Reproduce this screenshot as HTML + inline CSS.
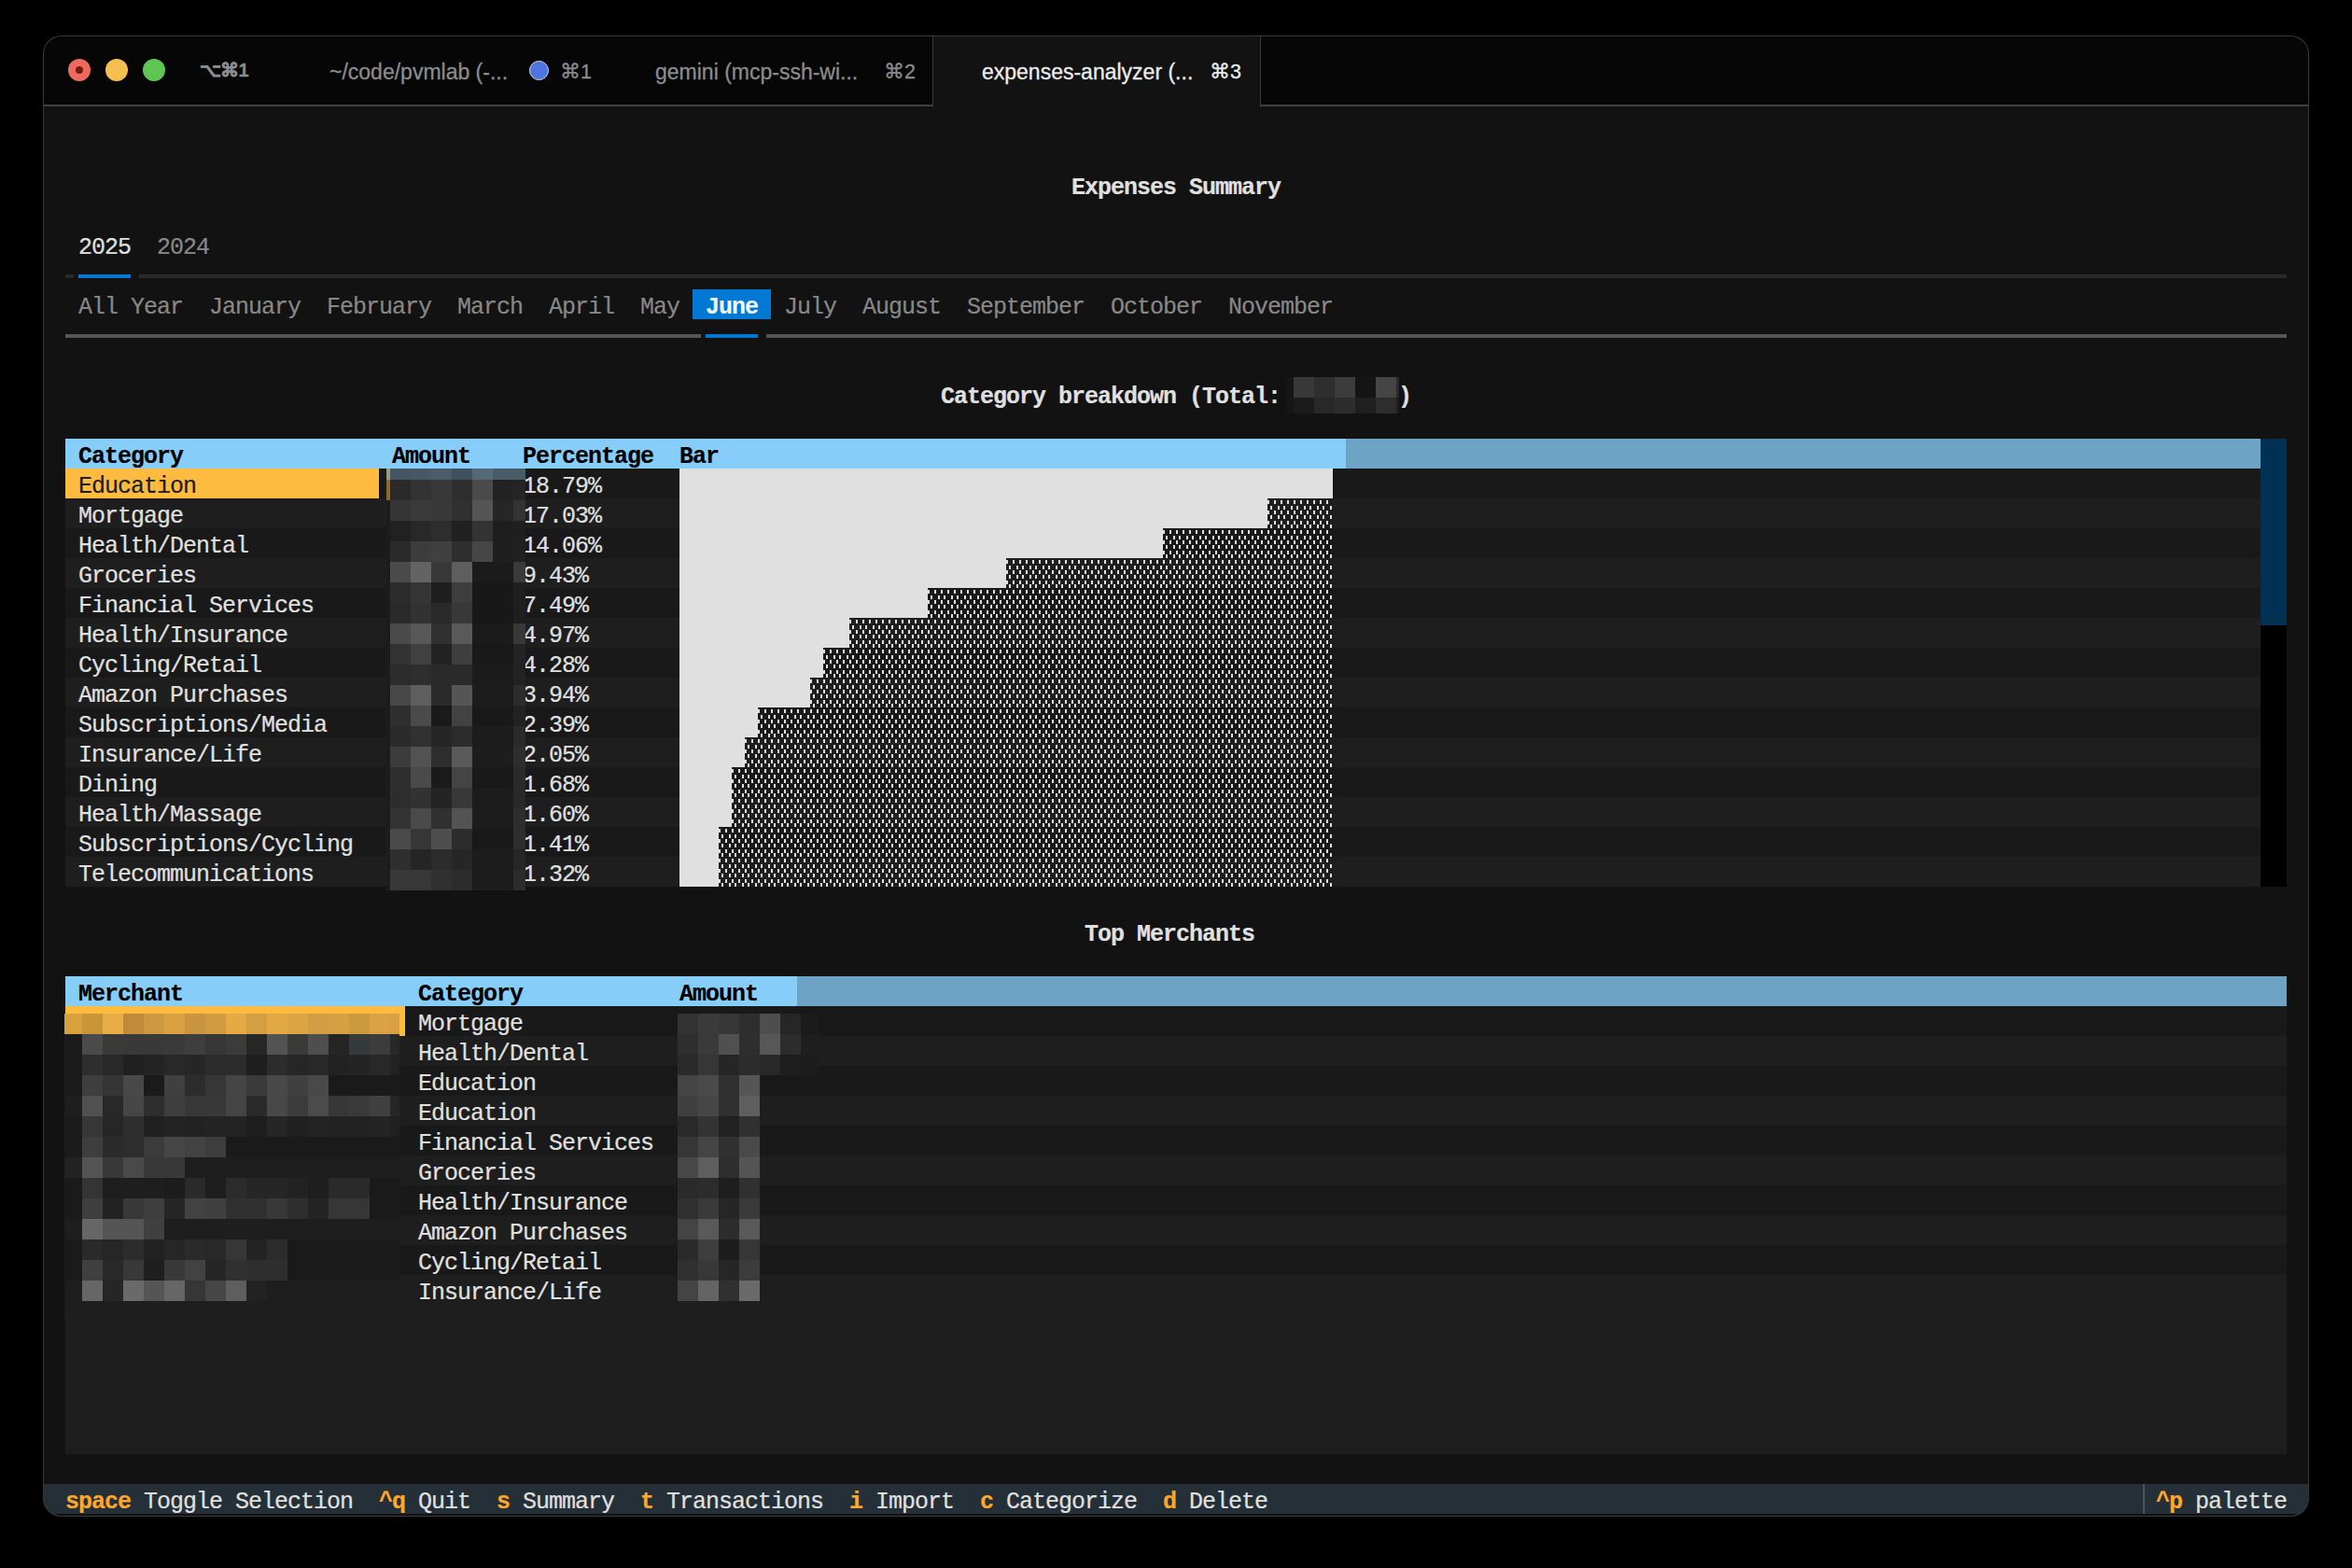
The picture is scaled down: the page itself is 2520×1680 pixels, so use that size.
<!DOCTYPE html>
<html><head><meta charset="utf-8">
<style>
html,body{margin:0;padding:0;}
body{width:2520px;height:1680px;background:#000;position:relative;overflow:hidden;font-family:"Liberation Mono",monospace;}
.t{position:absolute;white-space:pre;font-size:25px;letter-spacing:-1px;line-height:32px;height:32px;padding-top:2.5px;box-sizing:border-box;transform:scaleY(1.06);transform-origin:0 0;-webkit-text-stroke:0.2px currentColor;}
.s{position:absolute;white-space:pre;font-family:"Liberation Sans",sans-serif;font-size:23px;line-height:30px;-webkit-text-stroke:0.3px currentColor;}
#win{position:absolute;left:46px;top:38px;width:2428px;height:1587px;border-radius:20px;overflow:hidden;background:#121212;}
</style></head><body>
<svg width="0" height="0" style="position:absolute"><defs>
<pattern id="shade" patternUnits="userSpaceOnUse" width="14" height="32"><g fill="#e0e0e0"><rect x="0" y="2" width="2" height="4"/><rect x="0" y="13" width="2" height="4"/><rect x="0" y="24" width="2" height="4"/><rect x="7" y="2" width="2" height="4"/><rect x="7" y="13" width="2" height="4"/><rect x="7" y="24" width="2" height="4"/><rect x="3" y="8" width="2" height="4"/><rect x="3" y="18" width="2" height="4"/><rect x="3" y="28" width="2" height="4"/><rect x="11" y="8" width="2" height="4"/><rect x="11" y="18" width="2" height="4"/><rect x="11" y="28" width="2" height="4"/></g></pattern></defs></svg>
<div id="win">
<div style="position:absolute;left:-46px;top:-38px;width:2520px;height:1680px;">
<div style="position:absolute;left:46px;top:113px;width:2428px;height:1512px;background:#121212;"></div>
<div class="t" style="left:1148px;top:182px;color:#e0e0e0;font-weight:bold;">Expenses Summary</div>
<div class="t" style="left:84px;top:246px;color:#e0e0e0;">2025</div>
<div class="t" style="left:168px;top:246px;color:#888888;">2024</div>
<div style="position:absolute;left:70px;top:294px;width:9px;height:4px;background:#2a2a2a;"></div>
<div style="position:absolute;left:84px;top:294px;width:56px;height:4px;background:#0178d4;"></div>
<div style="position:absolute;left:149px;top:294px;width:2301px;height:4px;background:#2a2a2a;"></div>
<div class="t" style="left:84px;top:310px;color:#888888;">All Year</div>
<div class="t" style="left:224px;top:310px;color:#888888;">January</div>
<div class="t" style="left:350px;top:310px;color:#888888;">February</div>
<div class="t" style="left:490px;top:310px;color:#888888;">March</div>
<div class="t" style="left:588px;top:310px;color:#888888;">April</div>
<div class="t" style="left:686px;top:310px;color:#888888;">May</div>
<div style="position:absolute;left:742px;top:310px;width:84px;height:32px;background:#0178d4;"></div>
<div class="t" style="left:756px;top:310px;color:#eef6fd;font-weight:bold;">June</div>
<div class="t" style="left:840px;top:310px;color:#888888;">July</div>
<div class="t" style="left:924px;top:310px;color:#888888;">August</div>
<div class="t" style="left:1036px;top:310px;color:#888888;">September</div>
<div class="t" style="left:1190px;top:310px;color:#888888;">October</div>
<div class="t" style="left:1316px;top:310px;color:#888888;">November</div>
<div style="position:absolute;left:70px;top:358px;width:681px;height:4px;background:#555555;"></div>
<div style="position:absolute;left:756px;top:358px;width:56px;height:4px;background:#0178d4;"></div>
<div style="position:absolute;left:821px;top:358px;width:1629px;height:4px;background:#555555;"></div>
<div class="t" style="left:1008px;top:406px;color:#e0e0e0;font-weight:bold;">Category breakdown (Total: </div>
<div class="t" style="left:1498px;top:406px;color:#e0e0e0;font-weight:bold;">)</div>
<div style="position:absolute;left:70px;top:470px;width:1372px;height:32px;background:#87cdf9;"></div>
<div style="position:absolute;left:1442px;top:470px;width:980px;height:32px;background:#6da4c6;"></div>
<div class="t" style="left:84px;top:470px;color:#000;font-weight:bold;">Category</div>
<div class="t" style="left:420px;top:470px;color:#000;font-weight:bold;">Amount</div>
<div class="t" style="left:560px;top:470px;color:#000;font-weight:bold;">Percentage</div>
<div class="t" style="left:728px;top:470px;color:#000;font-weight:bold;">Bar</div>
<div style="position:absolute;left:70px;top:502px;width:2352px;height:32px;background:#191919;"></div>
<div style="position:absolute;left:70px;top:502px;width:336px;height:32px;background:#ffba40;"></div>
<div class="t" style="left:84px;top:502px;color:#1e1e1e;">Education</div>
<div class="t" style="left:560px;top:502px;color:#e0e0e0;">18.79%</div>
<div style="position:absolute;left:728px;top:502px;width:700px;height:32px;background:#e0e0e0;"></div>
<div style="position:absolute;left:70px;top:534px;width:2352px;height:32px;background:#1e1e1e;"></div>
<div class="t" style="left:84px;top:534px;color:#e0e0e0;">Mortgage</div>
<div class="t" style="left:560px;top:534px;color:#e0e0e0;">17.03%</div>
<div style="position:absolute;left:728px;top:534px;width:630px;height:32px;background:#e0e0e0;"></div>
<svg style="position:absolute;left:1358px;top:534px" width="70" height="32"><rect width="100%" height="100%" fill="url(#shade)"/></svg>
<div style="position:absolute;left:70px;top:566px;width:2352px;height:32px;background:#191919;"></div>
<div class="t" style="left:84px;top:566px;color:#e0e0e0;">Health/Dental</div>
<div class="t" style="left:560px;top:566px;color:#e0e0e0;">14.06%</div>
<div style="position:absolute;left:728px;top:566px;width:518px;height:32px;background:#e0e0e0;"></div>
<svg style="position:absolute;left:1246px;top:566px" width="182" height="32"><rect width="100%" height="100%" fill="url(#shade)"/></svg>
<div style="position:absolute;left:70px;top:598px;width:2352px;height:32px;background:#1e1e1e;"></div>
<div class="t" style="left:84px;top:598px;color:#e0e0e0;">Groceries</div>
<div class="t" style="left:560px;top:598px;color:#e0e0e0;">9.43%</div>
<div style="position:absolute;left:728px;top:598px;width:350px;height:32px;background:#e0e0e0;"></div>
<svg style="position:absolute;left:1078px;top:598px" width="350" height="32"><rect width="100%" height="100%" fill="url(#shade)"/></svg>
<div style="position:absolute;left:70px;top:630px;width:2352px;height:32px;background:#191919;"></div>
<div class="t" style="left:84px;top:630px;color:#e0e0e0;">Financial Services</div>
<div class="t" style="left:560px;top:630px;color:#e0e0e0;">7.49%</div>
<div style="position:absolute;left:728px;top:630px;width:266px;height:32px;background:#e0e0e0;"></div>
<svg style="position:absolute;left:994px;top:630px" width="434" height="32"><rect width="100%" height="100%" fill="url(#shade)"/></svg>
<div style="position:absolute;left:70px;top:662px;width:2352px;height:32px;background:#1e1e1e;"></div>
<div class="t" style="left:84px;top:662px;color:#e0e0e0;">Health/Insurance</div>
<div class="t" style="left:560px;top:662px;color:#e0e0e0;">4.97%</div>
<div style="position:absolute;left:728px;top:662px;width:182px;height:32px;background:#e0e0e0;"></div>
<svg style="position:absolute;left:910px;top:662px" width="518" height="32"><rect width="100%" height="100%" fill="url(#shade)"/></svg>
<div style="position:absolute;left:70px;top:694px;width:2352px;height:32px;background:#191919;"></div>
<div class="t" style="left:84px;top:694px;color:#e0e0e0;">Cycling/Retail</div>
<div class="t" style="left:560px;top:694px;color:#e0e0e0;">4.28%</div>
<div style="position:absolute;left:728px;top:694px;width:154px;height:32px;background:#e0e0e0;"></div>
<svg style="position:absolute;left:882px;top:694px" width="546" height="32"><rect width="100%" height="100%" fill="url(#shade)"/></svg>
<div style="position:absolute;left:70px;top:726px;width:2352px;height:32px;background:#1e1e1e;"></div>
<div class="t" style="left:84px;top:726px;color:#e0e0e0;">Amazon Purchases</div>
<div class="t" style="left:560px;top:726px;color:#e0e0e0;">3.94%</div>
<div style="position:absolute;left:728px;top:726px;width:140px;height:32px;background:#e0e0e0;"></div>
<svg style="position:absolute;left:868px;top:726px" width="560" height="32"><rect width="100%" height="100%" fill="url(#shade)"/></svg>
<div style="position:absolute;left:70px;top:758px;width:2352px;height:32px;background:#191919;"></div>
<div class="t" style="left:84px;top:758px;color:#e0e0e0;">Subscriptions/Media</div>
<div class="t" style="left:560px;top:758px;color:#e0e0e0;">2.39%</div>
<div style="position:absolute;left:728px;top:758px;width:84px;height:32px;background:#e0e0e0;"></div>
<svg style="position:absolute;left:812px;top:758px" width="616" height="32"><rect width="100%" height="100%" fill="url(#shade)"/></svg>
<div style="position:absolute;left:70px;top:790px;width:2352px;height:32px;background:#1e1e1e;"></div>
<div class="t" style="left:84px;top:790px;color:#e0e0e0;">Insurance/Life</div>
<div class="t" style="left:560px;top:790px;color:#e0e0e0;">2.05%</div>
<div style="position:absolute;left:728px;top:790px;width:70px;height:32px;background:#e0e0e0;"></div>
<svg style="position:absolute;left:798px;top:790px" width="630" height="32"><rect width="100%" height="100%" fill="url(#shade)"/></svg>
<div style="position:absolute;left:70px;top:822px;width:2352px;height:32px;background:#191919;"></div>
<div class="t" style="left:84px;top:822px;color:#e0e0e0;">Dining</div>
<div class="t" style="left:560px;top:822px;color:#e0e0e0;">1.68%</div>
<div style="position:absolute;left:728px;top:822px;width:56px;height:32px;background:#e0e0e0;"></div>
<svg style="position:absolute;left:784px;top:822px" width="644" height="32"><rect width="100%" height="100%" fill="url(#shade)"/></svg>
<div style="position:absolute;left:70px;top:854px;width:2352px;height:32px;background:#1e1e1e;"></div>
<div class="t" style="left:84px;top:854px;color:#e0e0e0;">Health/Massage</div>
<div class="t" style="left:560px;top:854px;color:#e0e0e0;">1.60%</div>
<div style="position:absolute;left:728px;top:854px;width:56px;height:32px;background:#e0e0e0;"></div>
<svg style="position:absolute;left:784px;top:854px" width="644" height="32"><rect width="100%" height="100%" fill="url(#shade)"/></svg>
<div style="position:absolute;left:70px;top:886px;width:2352px;height:32px;background:#191919;"></div>
<div class="t" style="left:84px;top:886px;color:#e0e0e0;">Subscriptions/Cycling</div>
<div class="t" style="left:560px;top:886px;color:#e0e0e0;">1.41%</div>
<div style="position:absolute;left:728px;top:886px;width:42px;height:32px;background:#e0e0e0;"></div>
<svg style="position:absolute;left:770px;top:886px" width="658" height="32"><rect width="100%" height="100%" fill="url(#shade)"/></svg>
<div style="position:absolute;left:70px;top:918px;width:2352px;height:32px;background:#1e1e1e;"></div>
<div class="t" style="left:84px;top:918px;color:#e0e0e0;">Telecommunications</div>
<div class="t" style="left:560px;top:918px;color:#e0e0e0;">1.32%</div>
<div style="position:absolute;left:728px;top:918px;width:42px;height:32px;background:#e0e0e0;"></div>
<svg style="position:absolute;left:770px;top:918px" width="658" height="32"><rect width="100%" height="100%" fill="url(#shade)"/></svg>
<div style="position:absolute;left:2422px;top:470px;width:28px;height:200px;background:#003153;"></div>
<div style="position:absolute;left:2422px;top:670px;width:28px;height:280px;background:#000000;"></div>
<div class="t" style="left:1162px;top:982px;color:#e0e0e0;font-weight:bold;">Top Merchants</div>
<div style="position:absolute;left:70px;top:1046px;width:784px;height:32px;background:#87cdf9;"></div>
<div style="position:absolute;left:854px;top:1046px;width:1596px;height:32px;background:#6da4c6;"></div>
<div class="t" style="left:84px;top:1046px;color:#000;font-weight:bold;">Merchant</div>
<div class="t" style="left:448px;top:1046px;color:#000;font-weight:bold;">Category</div>
<div class="t" style="left:728px;top:1046px;color:#000;font-weight:bold;">Amount</div>
<div style="position:absolute;left:70px;top:1078px;width:2380px;height:480px;background:#1e1e1e;"></div>
<div style="position:absolute;left:70px;top:1078px;width:2380px;height:32px;background:#191919;"></div>
<div style="position:absolute;left:70px;top:1078px;width:364px;height:32px;background:#ffba40;"></div>
<div class="t" style="left:448px;top:1078px;color:#e0e0e0;">Mortgage</div>
<div style="position:absolute;left:70px;top:1110px;width:2380px;height:32px;background:#1e1e1e;"></div>
<div class="t" style="left:448px;top:1110px;color:#e0e0e0;">Health/Dental</div>
<div style="position:absolute;left:70px;top:1142px;width:2380px;height:32px;background:#191919;"></div>
<div class="t" style="left:448px;top:1142px;color:#e0e0e0;">Education</div>
<div style="position:absolute;left:70px;top:1174px;width:2380px;height:32px;background:#1e1e1e;"></div>
<div class="t" style="left:448px;top:1174px;color:#e0e0e0;">Education</div>
<div style="position:absolute;left:70px;top:1206px;width:2380px;height:32px;background:#191919;"></div>
<div class="t" style="left:448px;top:1206px;color:#e0e0e0;">Financial Services</div>
<div style="position:absolute;left:70px;top:1238px;width:2380px;height:32px;background:#1e1e1e;"></div>
<div class="t" style="left:448px;top:1238px;color:#e0e0e0;">Groceries</div>
<div style="position:absolute;left:70px;top:1270px;width:2380px;height:32px;background:#191919;"></div>
<div class="t" style="left:448px;top:1270px;color:#e0e0e0;">Health/Insurance</div>
<div style="position:absolute;left:70px;top:1302px;width:2380px;height:32px;background:#1e1e1e;"></div>
<div class="t" style="left:448px;top:1302px;color:#e0e0e0;">Amazon Purchases</div>
<div style="position:absolute;left:70px;top:1334px;width:2380px;height:32px;background:#191919;"></div>
<div class="t" style="left:448px;top:1334px;color:#e0e0e0;">Cycling/Retail</div>
<div style="position:absolute;left:70px;top:1366px;width:2380px;height:32px;background:#1e1e1e;"></div>
<div class="t" style="left:448px;top:1366px;color:#e0e0e0;">Insurance/Life</div>
<svg style="position:absolute;left:414px;top:502px" width="149" height="452" shape-rendering="crispEdges"><rect x="0" y="0" width="4" height="12" fill="#9a9a80"/><rect x="4" y="0" width="22" height="12" fill="#435662"/><rect x="26" y="0" width="22" height="12" fill="#455864"/><rect x="48" y="0" width="22" height="12" fill="#4a5c68"/><rect x="70" y="0" width="22" height="12" fill="#3f515d"/><rect x="92" y="0" width="22" height="12" fill="#556878"/><rect x="114" y="0" width="22" height="12" fill="#4a5b68"/><rect x="136" y="0" width="13" height="12" fill="#4a5b68"/><rect x="0" y="12" width="4" height="22" fill="#8b6a30"/><rect x="4" y="12" width="22" height="22" fill="#2a2a2a"/><rect x="26" y="12" width="22" height="22" fill="#333333"/><rect x="48" y="12" width="22" height="22" fill="#393939"/><rect x="70" y="12" width="22" height="22" fill="#2e2e2e"/><rect x="92" y="12" width="22" height="22" fill="#4a4a4a"/><rect x="114" y="12" width="22" height="22" fill="#222222"/><rect x="136" y="12" width="13" height="22" fill="#252525"/><rect x="0" y="34" width="4" height="22" fill="#1c1c1c"/><rect x="4" y="34" width="22" height="22" fill="#353535"/><rect x="26" y="34" width="22" height="22" fill="#3a3a3a"/><rect x="48" y="34" width="22" height="22" fill="#383838"/><rect x="70" y="34" width="22" height="22" fill="#303030"/><rect x="92" y="34" width="22" height="22" fill="#555555"/><rect x="114" y="34" width="22" height="22" fill="#262626"/><rect x="136" y="34" width="13" height="22" fill="#333333"/><rect x="0" y="56" width="4" height="22" fill="#1c1c1c"/><rect x="4" y="56" width="22" height="22" fill="#212121"/><rect x="26" y="56" width="22" height="22" fill="#282828"/><rect x="48" y="56" width="22" height="22" fill="#2d2d2d"/><rect x="70" y="56" width="22" height="22" fill="#202020"/><rect x="92" y="56" width="22" height="22" fill="#333333"/><rect x="114" y="56" width="22" height="22" fill="#1e1e1e"/><rect x="136" y="56" width="13" height="22" fill="#1f1f1f"/><rect x="0" y="78" width="4" height="22" fill="#1c1c1c"/><rect x="4" y="78" width="22" height="22" fill="#2a2a2a"/><rect x="26" y="78" width="22" height="22" fill="#3c3c3c"/><rect x="48" y="78" width="22" height="22" fill="#404040"/><rect x="70" y="78" width="22" height="22" fill="#2e2e2e"/><rect x="92" y="78" width="22" height="22" fill="#464646"/><rect x="114" y="78" width="22" height="22" fill="#1f1f1f"/><rect x="136" y="78" width="13" height="22" fill="#202020"/><rect x="0" y="100" width="4" height="22" fill="#1c1c1c"/><rect x="4" y="100" width="22" height="22" fill="#4a4a4a"/><rect x="26" y="100" width="22" height="22" fill="#636363"/><rect x="48" y="100" width="22" height="22" fill="#383838"/><rect x="70" y="100" width="22" height="22" fill="#5e5e5e"/><rect x="92" y="100" width="22" height="22" fill="#1b1b1b"/><rect x="114" y="100" width="22" height="22" fill="#1b1b1b"/><rect x="136" y="100" width="13" height="22" fill="#3a3a3a"/><rect x="0" y="122" width="4" height="22" fill="#1c1c1c"/><rect x="4" y="122" width="22" height="22" fill="#2c2c2c"/><rect x="26" y="122" width="22" height="22" fill="#353535"/><rect x="48" y="122" width="22" height="22" fill="#1f1f1f"/><rect x="70" y="122" width="22" height="22" fill="#3d3d3d"/><rect x="92" y="122" width="22" height="22" fill="#181818"/><rect x="114" y="122" width="22" height="22" fill="#181818"/><rect x="136" y="122" width="13" height="22" fill="#1f1f1f"/><rect x="0" y="144" width="4" height="22" fill="#1c1c1c"/><rect x="4" y="144" width="22" height="22" fill="#2a2a2a"/><rect x="26" y="144" width="22" height="22" fill="#323232"/><rect x="48" y="144" width="22" height="22" fill="#2a2a2a"/><rect x="70" y="144" width="22" height="22" fill="#383838"/><rect x="92" y="144" width="22" height="22" fill="#181818"/><rect x="114" y="144" width="22" height="22" fill="#181818"/><rect x="136" y="144" width="13" height="22" fill="#1e1e1e"/><rect x="0" y="166" width="4" height="22" fill="#1c1c1c"/><rect x="4" y="166" width="22" height="22" fill="#4a4a4a"/><rect x="26" y="166" width="22" height="22" fill="#585858"/><rect x="48" y="166" width="22" height="22" fill="#303030"/><rect x="70" y="166" width="22" height="22" fill="#595959"/><rect x="92" y="166" width="22" height="22" fill="#1b1b1b"/><rect x="114" y="166" width="22" height="22" fill="#1b1b1b"/><rect x="136" y="166" width="13" height="22" fill="#383838"/><rect x="0" y="188" width="4" height="22" fill="#1c1c1c"/><rect x="4" y="188" width="22" height="22" fill="#333333"/><rect x="26" y="188" width="22" height="22" fill="#404040"/><rect x="48" y="188" width="22" height="22" fill="#222222"/><rect x="70" y="188" width="22" height="22" fill="#3e3e3e"/><rect x="92" y="188" width="22" height="22" fill="#191919"/><rect x="114" y="188" width="22" height="22" fill="#191919"/><rect x="136" y="188" width="13" height="22" fill="#232323"/><rect x="0" y="210" width="4" height="22" fill="#1c1c1c"/><rect x="4" y="210" width="22" height="22" fill="#2c2c2c"/><rect x="26" y="210" width="22" height="22" fill="#2e2e2e"/><rect x="48" y="210" width="22" height="22" fill="#2a2a2a"/><rect x="70" y="210" width="22" height="22" fill="#2b2b2b"/><rect x="92" y="210" width="22" height="22" fill="#1b1b1b"/><rect x="114" y="210" width="22" height="22" fill="#1b1b1b"/><rect x="136" y="210" width="13" height="22" fill="#222222"/><rect x="0" y="232" width="4" height="22" fill="#1c1c1c"/><rect x="4" y="232" width="22" height="22" fill="#484848"/><rect x="26" y="232" width="22" height="22" fill="#5e5e5e"/><rect x="48" y="232" width="22" height="22" fill="#2a2a2a"/><rect x="70" y="232" width="22" height="22" fill="#555555"/><rect x="92" y="232" width="22" height="22" fill="#1c1c1c"/><rect x="114" y="232" width="22" height="22" fill="#1c1c1c"/><rect x="136" y="232" width="13" height="22" fill="#2c2c2c"/><rect x="0" y="254" width="4" height="22" fill="#1c1c1c"/><rect x="4" y="254" width="22" height="22" fill="#2e2e2e"/><rect x="26" y="254" width="22" height="22" fill="#4a4a4a"/><rect x="48" y="254" width="22" height="22" fill="#1a1a1a"/><rect x="70" y="254" width="22" height="22" fill="#424242"/><rect x="92" y="254" width="22" height="22" fill="#191919"/><rect x="114" y="254" width="22" height="22" fill="#191919"/><rect x="136" y="254" width="13" height="22" fill="#222222"/><rect x="0" y="276" width="4" height="22" fill="#1c1c1c"/><rect x="4" y="276" width="22" height="22" fill="#2a2a2a"/><rect x="26" y="276" width="22" height="22" fill="#313131"/><rect x="48" y="276" width="22" height="22" fill="#262626"/><rect x="70" y="276" width="22" height="22" fill="#2c2c2c"/><rect x="92" y="276" width="22" height="22" fill="#1c1c1c"/><rect x="114" y="276" width="22" height="22" fill="#1c1c1c"/><rect x="136" y="276" width="13" height="22" fill="#2a2a2a"/><rect x="0" y="298" width="4" height="22" fill="#1c1c1c"/><rect x="4" y="298" width="22" height="22" fill="#3c3c3c"/><rect x="26" y="298" width="22" height="22" fill="#525252"/><rect x="48" y="298" width="22" height="22" fill="#2e2e2e"/><rect x="70" y="298" width="22" height="22" fill="#5a5a5a"/><rect x="92" y="298" width="22" height="22" fill="#1d1d1d"/><rect x="114" y="298" width="22" height="22" fill="#1d1d1d"/><rect x="136" y="298" width="13" height="22" fill="#2e2e2e"/><rect x="0" y="320" width="4" height="22" fill="#1c1c1c"/><rect x="4" y="320" width="22" height="22" fill="#2e2e2e"/><rect x="26" y="320" width="22" height="22" fill="#4a4a4a"/><rect x="48" y="320" width="22" height="22" fill="#1a1a1a"/><rect x="70" y="320" width="22" height="22" fill="#444444"/><rect x="92" y="320" width="22" height="22" fill="#191919"/><rect x="114" y="320" width="22" height="22" fill="#191919"/><rect x="136" y="320" width="13" height="22" fill="#2a2a2a"/><rect x="0" y="342" width="4" height="22" fill="#1c1c1c"/><rect x="4" y="342" width="22" height="22" fill="#2d2d2d"/><rect x="26" y="342" width="22" height="22" fill="#323232"/><rect x="48" y="342" width="22" height="22" fill="#242424"/><rect x="70" y="342" width="22" height="22" fill="#383838"/><rect x="92" y="342" width="22" height="22" fill="#1c1c1c"/><rect x="114" y="342" width="22" height="22" fill="#1c1c1c"/><rect x="136" y="342" width="13" height="22" fill="#282828"/><rect x="0" y="364" width="4" height="22" fill="#1c1c1c"/><rect x="4" y="364" width="22" height="22" fill="#333333"/><rect x="26" y="364" width="22" height="22" fill="#4a4a4a"/><rect x="48" y="364" width="22" height="22" fill="#303030"/><rect x="70" y="364" width="22" height="22" fill="#535353"/><rect x="92" y="364" width="22" height="22" fill="#1c1c1c"/><rect x="114" y="364" width="22" height="22" fill="#1c1c1c"/><rect x="136" y="364" width="13" height="22" fill="#2e2e2e"/><rect x="0" y="386" width="4" height="22" fill="#1c1c1c"/><rect x="4" y="386" width="22" height="22" fill="#4a4a4a"/><rect x="26" y="386" width="22" height="22" fill="#363636"/><rect x="48" y="386" width="22" height="22" fill="#4e4e4e"/><rect x="70" y="386" width="22" height="22" fill="#2c2c2c"/><rect x="92" y="386" width="22" height="22" fill="#191919"/><rect x="114" y="386" width="22" height="22" fill="#191919"/><rect x="136" y="386" width="13" height="22" fill="#2e2e2e"/><rect x="0" y="408" width="4" height="22" fill="#1c1c1c"/><rect x="4" y="408" width="22" height="22" fill="#2e2e2e"/><rect x="26" y="408" width="22" height="22" fill="#252525"/><rect x="48" y="408" width="22" height="22" fill="#2c2c2c"/><rect x="70" y="408" width="22" height="22" fill="#262626"/><rect x="92" y="408" width="22" height="22" fill="#1c1c1c"/><rect x="114" y="408" width="22" height="22" fill="#1c1c1c"/><rect x="136" y="408" width="13" height="22" fill="#262626"/><rect x="0" y="430" width="4" height="22" fill="#1c1c1c"/><rect x="4" y="430" width="22" height="22" fill="#383838"/><rect x="26" y="430" width="22" height="22" fill="#383838"/><rect x="48" y="430" width="22" height="22" fill="#303030"/><rect x="70" y="430" width="22" height="22" fill="#2c2c2c"/><rect x="92" y="430" width="22" height="22" fill="#1c1c1c"/><rect x="114" y="430" width="22" height="22" fill="#1c1c1c"/><rect x="136" y="430" width="13" height="22" fill="#2c2c2c"/></svg>
<svg style="position:absolute;left:1379px;top:404px" width="120" height="39" shape-rendering="crispEdges"><rect x="0" y="0" width="7" height="22" fill="#161616"/><rect x="7" y="0" width="22" height="22" fill="#393939"/><rect x="29" y="0" width="22" height="22" fill="#2e2e2e"/><rect x="51" y="0" width="22" height="22" fill="#3c3c3c"/><rect x="73" y="0" width="22" height="22" fill="#141414"/><rect x="95" y="0" width="22" height="22" fill="#454545"/><rect x="117" y="0" width="3" height="22" fill="#2a2a2a"/><rect x="0" y="22" width="7" height="17" fill="#161616"/><rect x="7" y="22" width="22" height="17" fill="#1b1b1b"/><rect x="29" y="22" width="22" height="17" fill="#282828"/><rect x="51" y="22" width="22" height="17" fill="#2d2d2d"/><rect x="73" y="22" width="22" height="17" fill="#1f1f1f"/><rect x="95" y="22" width="22" height="17" fill="#2d2d2d"/><rect x="117" y="22" width="3" height="17" fill="#1f1f1f"/></svg>
<svg style="position:absolute;left:69px;top:1086px" width="359" height="327" shape-rendering="crispEdges"><rect x="0" y="0" width="19" height="22" fill="#d9a03e"/><rect x="19" y="0" width="22" height="22" fill="#c99539"/><rect x="41" y="0" width="22" height="22" fill="#e8ad44"/><rect x="63" y="0" width="22" height="22" fill="#c18a3a"/><rect x="85" y="0" width="22" height="22" fill="#cc9840"/><rect x="107" y="0" width="22" height="22" fill="#d9a142"/><rect x="129" y="0" width="22" height="22" fill="#c99440"/><rect x="151" y="0" width="22" height="22" fill="#d19c40"/><rect x="173" y="0" width="22" height="22" fill="#e5aa44"/><rect x="195" y="0" width="22" height="22" fill="#d49e42"/><rect x="217" y="0" width="22" height="22" fill="#e2a843"/><rect x="239" y="0" width="22" height="22" fill="#dca443"/><rect x="261" y="0" width="22" height="22" fill="#d29e43"/><rect x="283" y="0" width="22" height="22" fill="#d6a042"/><rect x="305" y="0" width="22" height="22" fill="#cb9a3c"/><rect x="327" y="0" width="22" height="22" fill="#daa243"/><rect x="349" y="0" width="10" height="22" fill="#d8a042"/><rect x="0" y="22" width="19" height="22" fill="#1b1b1b"/><rect x="19" y="22" width="22" height="22" fill="#4a4a4a"/><rect x="41" y="22" width="22" height="22" fill="#3a3a38"/><rect x="63" y="22" width="22" height="22" fill="#393939"/><rect x="85" y="22" width="22" height="22" fill="#393939"/><rect x="107" y="22" width="22" height="22" fill="#3a3a3a"/><rect x="129" y="22" width="22" height="22" fill="#3e3e3e"/><rect x="151" y="22" width="22" height="22" fill="#363636"/><rect x="173" y="22" width="22" height="22" fill="#3b3b3a"/><rect x="195" y="22" width="22" height="22" fill="#262626"/><rect x="217" y="22" width="22" height="22" fill="#535353"/><rect x="239" y="22" width="22" height="22" fill="#3a3a38"/><rect x="261" y="22" width="22" height="22" fill="#4e4e4e"/><rect x="283" y="22" width="22" height="22" fill="#252525"/><rect x="305" y="22" width="22" height="22" fill="#373a3a"/><rect x="327" y="22" width="22" height="22" fill="#3c3c3c"/><rect x="349" y="22" width="10" height="22" fill="#282828"/><rect x="0" y="44" width="19" height="22" fill="#1b1b1b"/><rect x="19" y="44" width="22" height="22" fill="#2e2e2e"/><rect x="41" y="44" width="22" height="22" fill="#282828"/><rect x="63" y="44" width="22" height="22" fill="#202020"/><rect x="85" y="44" width="22" height="22" fill="#242424"/><rect x="107" y="44" width="22" height="22" fill="#282828"/><rect x="129" y="44" width="22" height="22" fill="#262626"/><rect x="151" y="44" width="22" height="22" fill="#2c2c2c"/><rect x="173" y="44" width="22" height="22" fill="#2c2c2c"/><rect x="195" y="44" width="22" height="22" fill="#1e1e1e"/><rect x="217" y="44" width="22" height="22" fill="#2c2c2c"/><rect x="239" y="44" width="22" height="22" fill="#262626"/><rect x="261" y="44" width="22" height="22" fill="#282828"/><rect x="283" y="44" width="22" height="22" fill="#222222"/><rect x="305" y="44" width="22" height="22" fill="#242424"/><rect x="327" y="44" width="22" height="22" fill="#282828"/><rect x="349" y="44" width="10" height="22" fill="#222222"/><rect x="0" y="66" width="19" height="22" fill="#1b1b1b"/><rect x="19" y="66" width="22" height="22" fill="#3e3e3e"/><rect x="41" y="66" width="22" height="22" fill="#353535"/><rect x="63" y="66" width="22" height="22" fill="#484848"/><rect x="85" y="66" width="22" height="22" fill="#1a1a1a"/><rect x="107" y="66" width="22" height="22" fill="#404040"/><rect x="129" y="66" width="22" height="22" fill="#2c2c2c"/><rect x="151" y="66" width="22" height="22" fill="#363636"/><rect x="173" y="66" width="22" height="22" fill="#454545"/><rect x="195" y="66" width="22" height="22" fill="#3a3a3a"/><rect x="217" y="66" width="22" height="22" fill="#484848"/><rect x="239" y="66" width="22" height="22" fill="#404040"/><rect x="261" y="66" width="22" height="22" fill="#494949"/><rect x="283" y="66" width="22" height="22" fill="#1a1a1a"/><rect x="305" y="66" width="22" height="22" fill="#1a1a1a"/><rect x="327" y="66" width="22" height="22" fill="#1a1a1a"/><rect x="349" y="66" width="10" height="22" fill="#1a1a1a"/><rect x="0" y="88" width="19" height="22" fill="#1e1e1e"/><rect x="19" y="88" width="22" height="22" fill="#505050"/><rect x="41" y="88" width="22" height="22" fill="#282828"/><rect x="63" y="88" width="22" height="22" fill="#464646"/><rect x="85" y="88" width="22" height="22" fill="#2e2e2e"/><rect x="107" y="88" width="22" height="22" fill="#3e3e3e"/><rect x="129" y="88" width="22" height="22" fill="#383838"/><rect x="151" y="88" width="22" height="22" fill="#383838"/><rect x="173" y="88" width="22" height="22" fill="#444444"/><rect x="195" y="88" width="22" height="22" fill="#2a2a2a"/><rect x="217" y="88" width="22" height="22" fill="#484848"/><rect x="239" y="88" width="22" height="22" fill="#3c3c3c"/><rect x="261" y="88" width="22" height="22" fill="#4b4b4b"/><rect x="283" y="88" width="22" height="22" fill="#373737"/><rect x="305" y="88" width="22" height="22" fill="#3a3a3a"/><rect x="327" y="88" width="22" height="22" fill="#404040"/><rect x="349" y="88" width="10" height="22" fill="#262626"/><rect x="0" y="110" width="19" height="22" fill="#1b1b1b"/><rect x="19" y="110" width="22" height="22" fill="#363636"/><rect x="41" y="110" width="22" height="22" fill="#262626"/><rect x="63" y="110" width="22" height="22" fill="#2e2e2e"/><rect x="85" y="110" width="22" height="22" fill="#202020"/><rect x="107" y="110" width="22" height="22" fill="#232323"/><rect x="129" y="110" width="22" height="22" fill="#222222"/><rect x="151" y="110" width="22" height="22" fill="#242424"/><rect x="173" y="110" width="22" height="22" fill="#232323"/><rect x="195" y="110" width="22" height="22" fill="#1e1e1e"/><rect x="217" y="110" width="22" height="22" fill="#262626"/><rect x="239" y="110" width="22" height="22" fill="#202020"/><rect x="261" y="110" width="22" height="22" fill="#242424"/><rect x="283" y="110" width="22" height="22" fill="#222222"/><rect x="305" y="110" width="22" height="22" fill="#222222"/><rect x="327" y="110" width="22" height="22" fill="#242424"/><rect x="349" y="110" width="10" height="22" fill="#202020"/><rect x="0" y="132" width="19" height="22" fill="#1b1b1b"/><rect x="19" y="132" width="22" height="22" fill="#3e3e3e"/><rect x="41" y="132" width="22" height="22" fill="#2b2b2b"/><rect x="63" y="132" width="22" height="22" fill="#2d2d2d"/><rect x="85" y="132" width="22" height="22" fill="#3b3b3b"/><rect x="107" y="132" width="22" height="22" fill="#464646"/><rect x="129" y="132" width="22" height="22" fill="#424242"/><rect x="151" y="132" width="22" height="22" fill="#3d3d3d"/><rect x="173" y="132" width="22" height="22" fill="#1a1a1a"/><rect x="195" y="132" width="22" height="22" fill="#1a1a1a"/><rect x="217" y="132" width="22" height="22" fill="#1a1a1a"/><rect x="239" y="132" width="22" height="22" fill="#1a1a1a"/><rect x="261" y="132" width="22" height="22" fill="#1a1a1a"/><rect x="283" y="132" width="22" height="22" fill="#1a1a1a"/><rect x="305" y="132" width="22" height="22" fill="#1a1a1a"/><rect x="327" y="132" width="22" height="22" fill="#1a1a1a"/><rect x="349" y="132" width="10" height="22" fill="#1a1a1a"/><rect x="0" y="154" width="19" height="22" fill="#222222"/><rect x="19" y="154" width="22" height="22" fill="#545454"/><rect x="41" y="154" width="22" height="22" fill="#383838"/><rect x="63" y="154" width="22" height="22" fill="#494949"/><rect x="85" y="154" width="22" height="22" fill="#393939"/><rect x="107" y="154" width="22" height="22" fill="#393939"/><rect x="129" y="154" width="22" height="22" fill="#1e1e1e"/><rect x="151" y="154" width="22" height="22" fill="#1e1e1e"/><rect x="173" y="154" width="22" height="22" fill="#1e1e1e"/><rect x="195" y="154" width="22" height="22" fill="#1e1e1e"/><rect x="217" y="154" width="22" height="22" fill="#1e1e1e"/><rect x="239" y="154" width="22" height="22" fill="#1e1e1e"/><rect x="261" y="154" width="22" height="22" fill="#1e1e1e"/><rect x="283" y="154" width="22" height="22" fill="#1e1e1e"/><rect x="305" y="154" width="22" height="22" fill="#1e1e1e"/><rect x="327" y="154" width="22" height="22" fill="#1e1e1e"/><rect x="349" y="154" width="10" height="22" fill="#1e1e1e"/><rect x="0" y="176" width="19" height="22" fill="#1a1a1a"/><rect x="19" y="176" width="22" height="22" fill="#343434"/><rect x="41" y="176" width="22" height="22" fill="#1e1e1e"/><rect x="63" y="176" width="22" height="22" fill="#1e1e1e"/><rect x="85" y="176" width="22" height="22" fill="#1e1e1e"/><rect x="107" y="176" width="22" height="22" fill="#1c1c1c"/><rect x="129" y="176" width="22" height="22" fill="#2a2a2a"/><rect x="151" y="176" width="22" height="22" fill="#1e1e1e"/><rect x="173" y="176" width="22" height="22" fill="#2c2c2c"/><rect x="195" y="176" width="22" height="22" fill="#262626"/><rect x="217" y="176" width="22" height="22" fill="#262626"/><rect x="239" y="176" width="22" height="22" fill="#222222"/><rect x="261" y="176" width="22" height="22" fill="#1e1e1e"/><rect x="283" y="176" width="22" height="22" fill="#2a2a2a"/><rect x="305" y="176" width="22" height="22" fill="#2a2a2a"/><rect x="327" y="176" width="22" height="22" fill="#1a1a1a"/><rect x="349" y="176" width="10" height="22" fill="#1a1a1a"/><rect x="0" y="198" width="19" height="22" fill="#1a1a1a"/><rect x="19" y="198" width="22" height="22" fill="#3e3e3e"/><rect x="41" y="198" width="22" height="22" fill="#222222"/><rect x="63" y="198" width="22" height="22" fill="#383838"/><rect x="85" y="198" width="22" height="22" fill="#3e3e3e"/><rect x="107" y="198" width="22" height="22" fill="#262626"/><rect x="129" y="198" width="22" height="22" fill="#424242"/><rect x="151" y="198" width="22" height="22" fill="#404040"/><rect x="173" y="198" width="22" height="22" fill="#303030"/><rect x="195" y="198" width="22" height="22" fill="#303030"/><rect x="217" y="198" width="22" height="22" fill="#383838"/><rect x="239" y="198" width="22" height="22" fill="#2e2e2e"/><rect x="261" y="198" width="22" height="22" fill="#242424"/><rect x="283" y="198" width="22" height="22" fill="#363636"/><rect x="305" y="198" width="22" height="22" fill="#363636"/><rect x="327" y="198" width="22" height="22" fill="#1a1a1a"/><rect x="349" y="198" width="10" height="22" fill="#1a1a1a"/><rect x="0" y="220" width="19" height="22" fill="#1e1e1e"/><rect x="19" y="220" width="22" height="22" fill="#666666"/><rect x="41" y="220" width="22" height="22" fill="#555555"/><rect x="63" y="220" width="22" height="22" fill="#555555"/><rect x="85" y="220" width="22" height="22" fill="#404040"/><rect x="107" y="220" width="22" height="22" fill="#1e1e1e"/><rect x="129" y="220" width="22" height="22" fill="#1e1e1e"/><rect x="151" y="220" width="22" height="22" fill="#1e1e1e"/><rect x="173" y="220" width="22" height="22" fill="#1e1e1e"/><rect x="195" y="220" width="22" height="22" fill="#1e1e1e"/><rect x="217" y="220" width="22" height="22" fill="#1e1e1e"/><rect x="239" y="220" width="22" height="22" fill="#1e1e1e"/><rect x="261" y="220" width="22" height="22" fill="#1e1e1e"/><rect x="283" y="220" width="22" height="22" fill="#1e1e1e"/><rect x="305" y="220" width="22" height="22" fill="#1e1e1e"/><rect x="327" y="220" width="22" height="22" fill="#1e1e1e"/><rect x="349" y="220" width="10" height="22" fill="#1e1e1e"/><rect x="0" y="242" width="19" height="22" fill="#1a1a1a"/><rect x="19" y="242" width="22" height="22" fill="#2a2a2a"/><rect x="41" y="242" width="22" height="22" fill="#262626"/><rect x="63" y="242" width="22" height="22" fill="#2c2c2c"/><rect x="85" y="242" width="22" height="22" fill="#222222"/><rect x="107" y="242" width="22" height="22" fill="#262626"/><rect x="129" y="242" width="22" height="22" fill="#2a2a2a"/><rect x="151" y="242" width="22" height="22" fill="#282828"/><rect x="173" y="242" width="22" height="22" fill="#363636"/><rect x="195" y="242" width="22" height="22" fill="#242424"/><rect x="217" y="242" width="22" height="22" fill="#2c2c2c"/><rect x="239" y="242" width="22" height="22" fill="#1a1a1a"/><rect x="261" y="242" width="22" height="22" fill="#1a1a1a"/><rect x="283" y="242" width="22" height="22" fill="#1a1a1a"/><rect x="305" y="242" width="22" height="22" fill="#1a1a1a"/><rect x="327" y="242" width="22" height="22" fill="#1a1a1a"/><rect x="349" y="242" width="10" height="22" fill="#1a1a1a"/><rect x="0" y="264" width="19" height="22" fill="#1a1a1a"/><rect x="19" y="264" width="22" height="22" fill="#404040"/><rect x="41" y="264" width="22" height="22" fill="#282828"/><rect x="63" y="264" width="22" height="22" fill="#383838"/><rect x="85" y="264" width="22" height="22" fill="#1e1e1e"/><rect x="107" y="264" width="22" height="22" fill="#383838"/><rect x="129" y="264" width="22" height="22" fill="#424242"/><rect x="151" y="264" width="22" height="22" fill="#262626"/><rect x="173" y="264" width="22" height="22" fill="#303030"/><rect x="195" y="264" width="22" height="22" fill="#2e2e2e"/><rect x="217" y="264" width="22" height="22" fill="#2e2e2e"/><rect x="239" y="264" width="22" height="22" fill="#1a1a1a"/><rect x="261" y="264" width="22" height="22" fill="#1a1a1a"/><rect x="283" y="264" width="22" height="22" fill="#1a1a1a"/><rect x="305" y="264" width="22" height="22" fill="#1a1a1a"/><rect x="327" y="264" width="22" height="22" fill="#1a1a1a"/><rect x="349" y="264" width="10" height="22" fill="#1a1a1a"/><rect x="0" y="286" width="19" height="22" fill="#1e1e1e"/><rect x="19" y="286" width="22" height="22" fill="#666666"/><rect x="41" y="286" width="22" height="22" fill="#262626"/><rect x="63" y="286" width="22" height="22" fill="#6a6a6a"/><rect x="85" y="286" width="22" height="22" fill="#555555"/><rect x="107" y="286" width="22" height="22" fill="#666666"/><rect x="129" y="286" width="22" height="22" fill="#363636"/><rect x="151" y="286" width="22" height="22" fill="#464646"/><rect x="173" y="286" width="22" height="22" fill="#5e5e5e"/><rect x="195" y="286" width="22" height="22" fill="#222222"/><rect x="217" y="286" width="22" height="22" fill="#1e1e1e"/><rect x="239" y="286" width="22" height="22" fill="#1e1e1e"/><rect x="261" y="286" width="22" height="22" fill="#1e1e1e"/><rect x="283" y="286" width="22" height="22" fill="#1e1e1e"/><rect x="305" y="286" width="22" height="22" fill="#1e1e1e"/><rect x="327" y="286" width="22" height="22" fill="#1e1e1e"/><rect x="349" y="286" width="10" height="22" fill="#1e1e1e"/><rect x="0" y="308" width="19" height="19" fill="#1e1e1e"/></svg>
<svg style="position:absolute;left:726px;top:1086px" width="151" height="308" shape-rendering="crispEdges"><rect x="0" y="0" width="22" height="22" fill="#333333"/><rect x="22" y="0" width="22" height="22" fill="#3a3a3a"/><rect x="44" y="0" width="22" height="22" fill="#363636"/><rect x="66" y="0" width="22" height="22" fill="#2e2e2e"/><rect x="88" y="0" width="22" height="22" fill="#4e4e4e"/><rect x="110" y="0" width="22" height="22" fill="#262626"/><rect x="132" y="0" width="19" height="22" fill="#1b1b1b"/><rect x="0" y="22" width="22" height="22" fill="#2e2e2e"/><rect x="22" y="22" width="22" height="22" fill="#3a3a3a"/><rect x="44" y="22" width="22" height="22" fill="#505050"/><rect x="66" y="22" width="22" height="22" fill="#2e2e2e"/><rect x="88" y="22" width="22" height="22" fill="#575757"/><rect x="110" y="22" width="22" height="22" fill="#2c2c2c"/><rect x="132" y="22" width="19" height="22" fill="#1e1e1e"/><rect x="0" y="44" width="22" height="22" fill="#2a2a2a"/><rect x="22" y="44" width="22" height="22" fill="#363636"/><rect x="44" y="44" width="22" height="22" fill="#262626"/><rect x="66" y="44" width="22" height="22" fill="#2c2c2c"/><rect x="88" y="44" width="22" height="22" fill="#282828"/><rect x="110" y="44" width="22" height="22" fill="#1e1e1e"/><rect x="132" y="44" width="19" height="22" fill="#1c1c1c"/><rect x="0" y="66" width="22" height="22" fill="#444444"/><rect x="22" y="66" width="22" height="22" fill="#4a4a4a"/><rect x="44" y="66" width="22" height="22" fill="#303030"/><rect x="66" y="66" width="22" height="22" fill="#555555"/><rect x="0" y="88" width="22" height="22" fill="#404040"/><rect x="22" y="88" width="22" height="22" fill="#464646"/><rect x="44" y="88" width="22" height="22" fill="#303030"/><rect x="66" y="88" width="22" height="22" fill="#5e5e5e"/><rect x="0" y="110" width="22" height="22" fill="#2a2a2a"/><rect x="22" y="110" width="22" height="22" fill="#333333"/><rect x="44" y="110" width="22" height="22" fill="#222222"/><rect x="66" y="110" width="22" height="22" fill="#303030"/><rect x="0" y="132" width="22" height="22" fill="#363636"/><rect x="22" y="132" width="22" height="22" fill="#444444"/><rect x="44" y="132" width="22" height="22" fill="#303030"/><rect x="66" y="132" width="22" height="22" fill="#4a4a4a"/><rect x="0" y="154" width="22" height="22" fill="#484848"/><rect x="22" y="154" width="22" height="22" fill="#5e5e5e"/><rect x="44" y="154" width="22" height="22" fill="#2e2e2e"/><rect x="66" y="154" width="22" height="22" fill="#555555"/><rect x="0" y="176" width="22" height="22" fill="#2a2a2a"/><rect x="22" y="176" width="22" height="22" fill="#2c2c2c"/><rect x="44" y="176" width="22" height="22" fill="#1e1e1e"/><rect x="66" y="176" width="22" height="22" fill="#303030"/><rect x="0" y="198" width="22" height="22" fill="#303030"/><rect x="22" y="198" width="22" height="22" fill="#3a3a3a"/><rect x="44" y="198" width="22" height="22" fill="#262626"/><rect x="66" y="198" width="22" height="22" fill="#3a3a3a"/><rect x="0" y="220" width="22" height="22" fill="#444444"/><rect x="22" y="220" width="22" height="22" fill="#595959"/><rect x="44" y="220" width="22" height="22" fill="#2c2c2c"/><rect x="66" y="220" width="22" height="22" fill="#595959"/><rect x="0" y="242" width="22" height="22" fill="#2a2a2a"/><rect x="22" y="242" width="22" height="22" fill="#3e3e3e"/><rect x="44" y="242" width="22" height="22" fill="#1c1c1c"/><rect x="66" y="242" width="22" height="22" fill="#363636"/><rect x="0" y="264" width="22" height="22" fill="#303030"/><rect x="22" y="264" width="22" height="22" fill="#383838"/><rect x="44" y="264" width="22" height="22" fill="#262626"/><rect x="66" y="264" width="22" height="22" fill="#3c3c3c"/><rect x="0" y="286" width="22" height="22" fill="#444444"/><rect x="22" y="286" width="22" height="22" fill="#646464"/><rect x="44" y="286" width="22" height="22" fill="#303030"/><rect x="66" y="286" width="22" height="22" fill="#6a6a6a"/></svg>
<div style="position:absolute;left:46px;top:1590px;width:2428px;height:32px;background:#242f37;"></div>
<div class="t" style="left:70px;top:1590px;color:#ffa62b;font-weight:bold;">space</div>
<div class="t" style="left:154px;top:1590px;color:#e0e0e0;">Toggle Selection</div>
<div class="t" style="left:406px;top:1590px;color:#ffa62b;font-weight:bold;">^q</div>
<div class="t" style="left:448px;top:1590px;color:#e0e0e0;">Quit</div>
<div class="t" style="left:532px;top:1590px;color:#ffa62b;font-weight:bold;">s</div>
<div class="t" style="left:560px;top:1590px;color:#e0e0e0;">Summary</div>
<div class="t" style="left:686px;top:1590px;color:#ffa62b;font-weight:bold;">t</div>
<div class="t" style="left:714px;top:1590px;color:#e0e0e0;">Transactions</div>
<div class="t" style="left:910px;top:1590px;color:#ffa62b;font-weight:bold;">i</div>
<div class="t" style="left:938px;top:1590px;color:#e0e0e0;">Import</div>
<div class="t" style="left:1050px;top:1590px;color:#ffa62b;font-weight:bold;">c</div>
<div class="t" style="left:1078px;top:1590px;color:#e0e0e0;">Categorize</div>
<div class="t" style="left:1246px;top:1590px;color:#ffa62b;font-weight:bold;">d</div>
<div class="t" style="left:1274px;top:1590px;color:#e0e0e0;">Delete</div>
<div style="position:absolute;left:2296px;top:1590px;width:2px;height:32px;background:#4a545c;"></div>
<div class="t" style="left:2310px;top:1590px;color:#ffa62b;font-weight:bold;">^p</div>
<div class="t" style="left:2352px;top:1590px;color:#e0e0e0;">palette</div>
</div>
<!-- title bar -->
<div style="position:absolute;left:0;top:0;width:2428px;height:76px;background:#060606;border-bottom:2px solid #404040;box-sizing:border-box;"></div>
<div style="position:absolute;left:953px;top:0;width:352px;height:77px;background:#121212;border-left:1px solid #3a3a3a;border-right:1px solid #3a3a3a;box-sizing:border-box;"></div>
<div style="position:absolute;left:27px;top:25px;width:24px;height:24px;border-radius:50%;background:#ed6a5e;"></div>
<div style="position:absolute;left:35px;top:33px;width:8px;height:8px;border-radius:50%;background:#7a1810;"></div>
<div style="position:absolute;left:67px;top:25px;width:24px;height:24px;border-radius:50%;background:#f5bf4f;"></div>
<div style="position:absolute;left:107px;top:25px;width:24px;height:24px;border-radius:50%;background:#61c554;"></div>
<div class="s" style="left:168px;top:22px;color:#8c8c8c;font-weight:bold;font-size:20px;letter-spacing:-0.8px;">⌥⌘1</div>
<div class="s" style="left:307px;top:23.5px;color:#8c8c8c;">~/code/pvmlab (-...</div>
<div style="position:absolute;left:521px;top:27px;width:19px;height:19px;border-radius:50%;background:#4f74e0;border:1px solid #d0d8f0;"></div>
<div class="s" style="left:554px;top:23.5px;color:#8c8c8c;font-size:21.5px;">⌘1</div>
<div class="s" style="left:656px;top:23.5px;color:#8c8c8c;">gemini (mcp-ssh-wi...</div>
<div class="s" style="left:901px;top:23.5px;color:#8c8c8c;font-size:21.5px;">⌘2</div>
<div class="s" style="left:1006px;top:23.5px;color:#ececec;">expenses-analyzer (...</div>
<div class="s" style="left:1250px;top:23.5px;color:#ececec;font-size:21.5px;">⌘3</div>
</div>
<div style="position:absolute;left:46px;top:38px;width:2428px;height:1587px;border-radius:20px;box-shadow:inset 0 0 0 1px #383838;pointer-events:none;"></div>
</body></html>
